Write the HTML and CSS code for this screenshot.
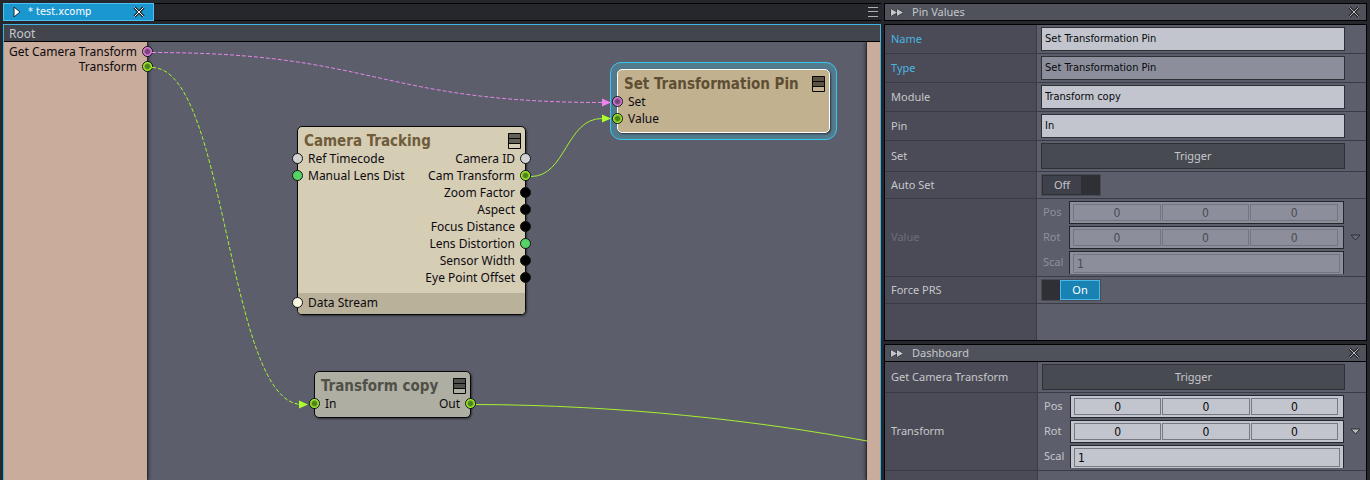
FILE: index.html
```
<!DOCTYPE html>
<html lang="en">
<head>
<meta charset="utf-8">
<title>test.xcomp</title>
<link rel="stylesheet" href="styles.css">
</head>
<body>
<svg class="defs" aria-hidden="true">
  <symbol id="close" viewBox="0 0 12 12">
    <path class="close-edge" d="M1.500 1.500L10.500 10.500M10.500 1.500L1.500 10.500"/>
    <path class="close-line" d="M1.500 1.500L10.500 10.500M10.500 1.500L1.500 10.500"/>
  </symbol>
  <symbol id="forward" viewBox="0 0 14 9">
    <path d="M1 1L7 4.500L1 8ZM7 1L13 4.500L7 8Z"/>
  </symbol>
  <symbol id="menu" viewBox="0 0 13 16">
    <path class="menu-line" d="M0.500 0.500H12.500V15.500H0.500ZM0 5.500H13M0 10.500H13"/>
  </symbol>
  <symbol id="drop" viewBox="0 0 11 7">
    <path d="M1 1H10L5.500 6Z"/>
  </symbol>
</svg>
<main class="app">
  <section class="editor">
    <div class="tabs">
      <div class="tab">
        <svg class="play" viewBox="0 0 8 12"><path d="M1 1L7 6L1 11Z"/></svg>
        <span class="tab-name">* test.xcomp</span>
        <button class="icon-button" aria-label="Close tab"><svg class="close close-tab"><use href="#close"/></svg></button>
      </div>
      <div class="tab-space">
        <button class="icon-button" aria-label="Tab list"><svg class="burger" viewBox="0 0 10 10"><path d="M0 0.500H10M0 4.500H10M0 9.500H10"/></svg></button>
      </div>
    </div>
    <div class="graph">
      <div class="path">Root</div>
      <div class="canvas">
        <div class="rail rail-in">
          <div class="port">Get Camera Transform<i class="pin pin-pink"></i></div>
          <div class="port">Transform<i class="pin pin-lime"></i></div>
        </div>
        <div class="rail rail-out"></div>
        <div class="halo"></div>
        <svg class="wires">
          <path class="wire pink dash" d="M148 10.500C373 10.500 373 60.500 600 60.500"/>
          <path class="wire lime dash" d="M148 25.500C223 25.500 223 362.500 298 362.500"/>
          <path class="wire lime" d="M527 134.500C562 134.500 562 76.500 598 76.500"/>
          <path class="wire lime" d="M472 362.500C616 363 756 379 863 399"/>
        </svg>

        <article class="node camera">
          <h2 class="node-head">Camera Tracking<svg class="menu"><use href="#menu"/></svg></h2>
          <div class="ports">
            <div class="inputs">
              <div class="row"><i class="pin pin-gray"></i>Ref Timecode</div>
              <div class="row"><i class="pin pin-green"></i>Manual Lens Dist</div>
            </div>
            <div class="outputs">
              <div class="row">Camera ID<i class="pin pin-gray"></i></div>
              <div class="row">Cam Transform<i class="pin pin-lime"></i></div>
              <div class="row">Zoom Factor<i class="pin pin-black"></i></div>
              <div class="row">Aspect<i class="pin pin-black"></i></div>
              <div class="row">Focus Distance<i class="pin pin-black"></i></div>
              <div class="row">Lens Distortion<i class="pin pin-green"></i></div>
              <div class="row">Sensor Width<i class="pin pin-black"></i></div>
              <div class="row">Eye Point Offset<i class="pin pin-black"></i></div>
            </div>
          </div>
          <div class="stream"><div class="row"><i class="pin pin-cream"></i>Data Stream</div></div>
        </article>

        <article class="node setter">
          <h2 class="node-head">Set Transformation Pin<svg class="menu"><use href="#menu"/></svg></h2>
          <div class="ports">
            <div class="inputs">
              <div class="row"><i class="pin pin-pink"></i>Set</div>
              <div class="row"><i class="pin pin-lime"></i>Value</div>
            </div>
          </div>
        </article>

        <article class="node copy">
          <h2 class="node-head">Transform copy<svg class="menu"><use href="#menu"/></svg></h2>
          <div class="ports">
            <div class="inputs"><div class="row"><i class="pin pin-lime"></i>In</div></div>
            <div class="outputs"><div class="row">Out<i class="pin pin-lime"></i></div></div>
          </div>
        </article>

        <svg class="wires">
          <path class="arrow-pink" d="M598 56.500L607 60.500L598 64.500Z"/>
          <path class="arrow-lime" d="M598 72.500L607 76.500L598 80.500Z"/>
          <path class="arrow-lime" d="M295 358.500L304 362.500L295 366.500Z"/>
        </svg>
      </div>
    </div>
  </section>

  <aside class="side">
    <section class="panel">
      <header class="panel-head">
        <svg class="forward"><use href="#forward"/></svg><h1 class="panel-name">Pin Values</h1>
        <button class="icon-button" aria-label="Close Pin Values"><svg class="close"><use href="#close"/></svg></button>
      </header>
      <div class="props apart">
        <div class="prop"><label class="key accent" for="name">Name</label><div class="value"><input class="text" id="name" value="Set Transformation Pin"></div></div>
        <div class="prop"><label class="key accent" for="type">Type</label><div class="value"><input class="text locked" id="type" value="Set Transformation Pin" readonly></div></div>
        <div class="prop"><label class="key" for="module">Module</label><div class="value"><input class="text" id="module" value="Transform copy"></div></div>
        <div class="prop"><label class="key" for="pin">Pin</label><div class="value"><input class="text" id="pin" value="In"></div></div>
        <div class="prop"><label class="key" for="set">Set</label><div class="value"><button class="trigger" id="set">Trigger</button></div></div>
        <div class="prop"><label class="key" for="auto">Auto Set</label><div class="value"><button class="toggle" id="auto" role="switch" aria-checked="false"><span class="thumb">Off</span></button></div></div>
        <div class="prop disabled"><div class="key">Value</div>
          <div class="value">
            <div class="transform">
              <span class="axis">Pos</span><div class="vector"><input class="num" value="0" aria-label="Pos X" disabled><input class="num" value="0" aria-label="Pos Y" disabled><input class="num" value="0" aria-label="Pos Z" disabled></div>
              <span class="axis">Rot</span><div class="vector"><input class="num" value="0" aria-label="Rot X" disabled><input class="num" value="0" aria-label="Rot Y" disabled><input class="num" value="0" aria-label="Rot Z" disabled></div>
              <label class="axis" for="scal1">Scal</label><div class="vector single"><input class="num" id="scal1" value="1" disabled></div>
            </div>
            <button class="icon-button" aria-label="Value options" disabled><svg class="drop"><use href="#drop"/></svg></button>
          </div>
        </div>
        <div class="prop"><label class="key" for="prs">Force PRS</label><div class="value"><button class="toggle on" id="prs" role="switch" aria-checked="true"><span class="thumb">On</span></button></div></div>
        <div class="prop rest"><div class="key"></div><div class="value"></div></div>
      </div>
    </section>
    <section class="panel grow">
      <header class="panel-head">
        <svg class="forward"><use href="#forward"/></svg><h1 class="panel-name">Dashboard</h1>
        <button class="icon-button" aria-label="Close Dashboard"><svg class="close"><use href="#close"/></svg></button>
      </header>
      <div class="props dash-props">
        <div class="prop"><label class="key" for="get">Get Camera Transform</label><div class="value"><button class="trigger" id="get">Trigger</button></div></div>
        <div class="prop"><div class="key">Transform</div>
          <div class="value">
            <div class="transform">
              <span class="axis">Pos</span><div class="vector"><input class="num" value="0" aria-label="Pos X"><input class="num" value="0" aria-label="Pos Y"><input class="num" value="0" aria-label="Pos Z"></div>
              <span class="axis">Rot</span><div class="vector"><input class="num" value="0" aria-label="Rot X"><input class="num" value="0" aria-label="Rot Y"><input class="num" value="0" aria-label="Rot Z"></div>
              <label class="axis" for="scal2">Scal</label><div class="vector single"><input class="num" id="scal2" value="1"></div>
            </div>
            <button class="icon-button" aria-label="Transform options"><svg class="drop"><use href="#drop"/></svg></button>
          </div>
        </div>
        <div class="prop rest"><div class="key"></div><div class="value"></div></div>
      </div>
    </section>
  </aside>
</main>
</body>
</html>
```
FILE: styles.css
```
* { box-sizing: border-box; }
body {
  margin: 0;
  background: #25272c;
  color: #c6c7cb;
  font-family: Tahoma, "Noto Sans", sans-serif;
  font-size: 11px;
}
button, input { font: inherit; color: inherit; margin: 0; padding: 0; min-width: 0; }
.defs { position: absolute; width: 0; height: 0; }
.app { display: flex; gap: 3px; height: 100vh; padding: 3px 3px 0; overflow: hidden; }
.icon-button { display: flex; align-items: center; justify-content: center; border: 0; background: none; }

.close { width: 12px; height: 12px; fill: none; color: #b9babd; }
.close-edge { stroke: #25272b; stroke-width: 3; }
.close-line { stroke: currentColor; stroke-width: 1; }
.close-tab { color: #fff; }

.editor { flex: 1; min-width: 0; display: flex; flex-direction: column; gap: 3px; }
.tabs { display: flex; height: 18px; }
.tab {
  width: 151px; display: flex; align-items: center; padding: 0 8px 0 9px;
  background: #1a97cf; border: 1px solid #50c0f0; color: #fff;
  font-family: Tahoma, "DejaVu Sans Condensed", sans-serif; line-height: 16px;
}
.play { width: 8px; height: 12px; margin-right: 7px; fill: #fff; stroke: #1d2a33; stroke-width: 1; }
.tab-name { flex: 1; white-space: nowrap; }
.tab-space { flex: 1; display: flex; justify-content: flex-end; padding-right: 3px; border: solid #000; border-width: 1px 0; }
.burger { width: 10px; height: 10px; fill: none; stroke: #aeb0b3; }

.graph { flex: 1; min-height: 0; display: flex; flex-direction: column; border: solid #3db3e8; border-width: 1px 1px 0; }
.path { height: 17px; padding-left: 5px; background: #42454c; border-bottom: 1px solid #000; font-size: 12px; line-height: 17px; }
.canvas { flex: 1; position: relative; overflow: hidden; display: flex; justify-content: space-between; background: #5c5e6b; color: #0c0a10; font-size: 12px; }
.rail { background: #c9ac9b; }
.rail-in { width: 144px; padding-top: 2px; border-right: 1px solid #2d2b30; box-shadow: 1px 0 3px #33353d; }
.rail-out { width: 14px; border-left: 1px solid #2d2b30; box-shadow: -1px 0 3px #33353d; }
.port { display: flex; align-items: center; justify-content: flex-end; gap: 5px; height: 15px; white-space: nowrap; }
.port .pin { margin-right: -6px; }

.pin { flex: none; width: 11px; height: 11px; border: 1px solid #101510; border-radius: 50%; }
.pin-pink { background: radial-gradient(circle, #7a4379 2px, #e583e6 4px); }
.pin-lime { background: radial-gradient(circle, #50801c 2px, #a4f52c 4px); }
.pin-gray { background: #d2d2d2; }
.pin-green { background: #56d266; }
.pin-black { background: #000; }
.pin-cream { background: #f8f7e2; }

.wires { position: absolute; inset: 0; width: 100%; height: 100%; pointer-events: none; }
.wire { fill: none; stroke-width: 1; }
.dash { stroke-dasharray: 4 2; }
.pink { stroke: #e487e6; }
.lime { stroke: #a6f032; }
.arrow-pink { fill: #f083ee; }
.arrow-lime { fill: #acff2f; }

.node { position: absolute; padding-bottom: 5px; border: 1px solid #08080a; border-radius: 5px; box-shadow: 1px 1px 2px #303238; }
.node-head {
  display: flex; align-items: center; justify-content: space-between; height: 23px; margin: 0; padding: 4px 4px 0 6px;
  font-family: Tahoma, "DejaVu Sans Condensed", sans-serif; font-size: 15px; line-height: 20px; font-weight: bold; white-space: nowrap;
}
.menu { flex: none; width: 13px; height: 16px; background: linear-gradient(#0008 0 10px, #0000 10px); }
.menu-line { fill: none; stroke: #08080a; }
.ports { display: flex; justify-content: space-between; }
.outputs { margin-left: auto; }
.row { display: flex; align-items: center; gap: 5px; height: 17px; white-space: nowrap; }
.inputs .pin, .stream .pin { margin-left: -6px; }
.outputs .row { justify-content: flex-end; }
.outputs .pin { margin-right: -6px; }
.camera { left: 293px; top: 84px; width: 229px; padding-bottom: 0; background: #d6cdb5; }
.camera .node-head { color: #6f5c3a; }
.camera .ports { padding-bottom: 7px; }
.stream { height: 21px; padding-top: 1px; background: #b9b199; border-radius: 0 0 4px 4px; }
.setter { left: 613px; top: 27px; width: 213px; background: #c1b18f; border-color: #fff; }
.setter .node-head { color: #5e4f34; }
.copy { left: 310px; top: 329px; width: 157px; background: #aeaea2; }
.copy .node-head { color: #505049; }
.halo { position: absolute; left: 606px; top: 20px; width: 227px; height: 78px; border: 1px solid #38c8ee; border-radius: 11px; background: #527b8d; }

.side { flex: none; width: 483px; display: flex; flex-direction: column; gap: 3px; }
.panel { display: flex; flex-direction: column; }
.panel.grow { flex: 1; min-height: 0; }
.panel-head { flex: none; display: flex; align-items: center; height: 18px; padding: 0 6px 0 5px; border: 1px solid #000; background: #4f525a; }
.forward { width: 14px; height: 9px; fill: #c4c6c9; stroke: #25272b; stroke-width: 1; paint-order: stroke; }
.panel-name { flex: 1; margin: 0 0 0 8px; font-size: 11px; line-height: 16px; font-weight: normal; }
.props { border: 1px solid #000; }
.apart { margin-top: 3px; }
.dash-props { border-top: 0; border-bottom: 0; flex: 1; display: flex; flex-direction: column; }
.dash-props .rest { flex: 1; height: auto; }
.prop { display: flex; border-bottom: 1px solid #3a3c45; }
.key { width: 152px; display: flex; align-items: center; padding: 0 0 2px 6px; background: #4a4b56; border-right: 1px solid #3a3c45; }
.dash-props .key { width: 153px; }
.accent { color: #4ab5e2; }
.value { flex: 1; display: flex; align-items: flex-start; padding: 2px 21px 2px 4px; background: #5c5e6b; }
.rest { height: 36px; border-bottom: 0; }
.text, .num { font-family: Tahoma, "DejaVu Sans Condensed", sans-serif; }
.text { flex: 1; height: 24px; padding: 0 3px 2px; border: 1px solid #2f3036; background: #c2c5cd; color: #08080c; }
.locked { background: #8c8f9b; }
.trigger { flex: 1; height: 26px; padding-bottom: 2px; border: 1px solid #2f3036; background: #484a52; }
.toggle { display: flex; width: 60px; height: 22px; border: 1px solid #4a4c55; background: #2f3035; }
.thumb { width: 40px; height: 20px; line-height: 18px; border: 1px solid #2f3036; background: #3f414a; }
.on { justify-content: flex-end; }
.on .thumb { background: #1982b3; border-color: #4abbe9; color: #fff; }
.transform { flex: 1; display: grid; grid-template-columns: 24px 1fr; column-gap: 4px; row-gap: 2px; }
.axis { padding-left: 2px; line-height: 21px; }
.vector { display: grid; grid-template-columns: repeat(3, 1fr); gap: 1px; height: 23px; padding: 2px 5px 2px 3px; border: 1px solid #25262b; background: #c2c5cd; }
.single { grid-template-columns: 1fr; padding: 2px 3px 1px; border-bottom: 0; }
.num { width: 100%; border: 1px solid #777982; background: #c2c5cd; color: #08080c; font-size: 12px; text-align: center; }
.single .num { text-align: left; padding: 0 3px; }
.value .icon-button { align-self: center; width: 22px; margin-right: -21px; }
.drop { width: 11px; height: 7px; fill: #b9babd; stroke: #2d2e34; }
.disabled .key { color: #6b6d79; }
.disabled .axis { color: #8e909b; }
.disabled .vector, .disabled .num { background: #8c8f9b; }
.disabled .num { color: #484a54; border-color: #737581; }
.disabled .drop { fill: #6b6d78; }
```
